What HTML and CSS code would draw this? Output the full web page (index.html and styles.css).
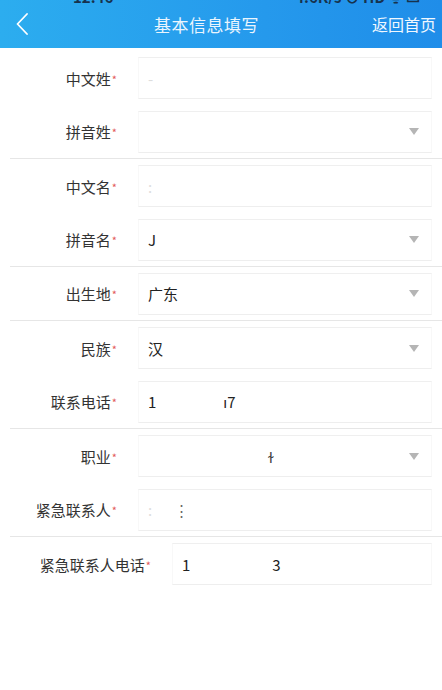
FILE: index.html
```html
<!DOCTYPE html>
<html lang="zh-CN">
<head>
<meta charset="utf-8">
<title>基本信息填写</title>
<link rel="stylesheet" href="styles.css">
</head>
<body>
<header class="header">
  <div class="status">
    <span class="status-left">12:46</span>
    <span class="status-right">4.6K/s ⊙ HD ᯤ ▭</span>
  </div>
  <div class="nav">
    <div class="back">
      <svg width="12" height="22" viewBox="0 0 12 22"><polyline points="11,1 1.5,11 11,21" fill="none" stroke="#ffffff" stroke-width="1.8" stroke-linecap="round" stroke-linejoin="round"/></svg>
    </div>
    <div class="title">基本信息填写</div>
    <div class="home">返回首页</div>
  </div>
</header>
<main class="form">
  <div class="row">
    <div class="label">中文姓<span class="req">*</span></div>
    <div class="field"><span class="faint">-</span></div>
  </div>
  <div class="row sep">
    <div class="label">拼音姓<span class="req">*</span></div>
    <div class="field select"><span class="value"></span><span class="arrow"></span></div>
  </div>
  <div class="row">
    <div class="label">中文名<span class="req">*</span></div>
    <div class="field"><span class="faint">:</span></div>
  </div>
  <div class="row sep">
    <div class="label">拼音名<span class="req">*</span></div>
    <div class="field select"><span class="value">J</span><span class="arrow"></span></div>
  </div>
  <div class="row sep">
    <div class="label">出生地<span class="req">*</span></div>
    <div class="field select"><span class="value">广东</span><span class="arrow"></span></div>
  </div>
  <div class="row">
    <div class="label">民族<span class="req">*</span></div>
    <div class="field select"><span class="value">汉</span><span class="arrow"></span></div>
  </div>
  <div class="row sep">
    <div class="label">联系电话<span class="req">*</span></div>
    <div class="field"><span class="value">1</span><span class="value gap-phone">ı7</span></div>
  </div>
  <div class="row">
    <div class="label">职业<span class="req">*</span></div>
    <div class="field select"><span class="value gap-job">ɫ</span><span class="arrow"></span></div>
  </div>
  <div class="row sep">
    <div class="label">紧急联系人<span class="req">*</span></div>
    <div class="field"><span class="faint">:</span><span class="value gap-contact">⋮</span></div>
  </div>
  <div class="row wide">
    <div class="label">紧急联系人电话<span class="req">*</span></div>
    <div class="field"><span class="value">1</span><span class="value gap-ephone">3</span></div>
  </div>
</main>
</body>
</html>
```
FILE: styles.css
```css
* { box-sizing: border-box; }
html, body {
  margin: 0;
  padding: 0;
  background: #ffffff;
  font-family: "Noto Sans CJK SC", "Noto Sans", sans-serif;
  color: #333333;
}
.header {
  height: 48px;
  background: linear-gradient(90deg, #2cadef 0%, #2599ec 60%, #1f8de9 100%);
  display: flex;
  flex-direction: column;
}
.status {
  height: 4px;
  overflow: hidden;
  display: flex;
  justify-content: space-between;
  padding: 0 22px 0 73px;
  color: #17324d;
  font-size: 15px;
  font-weight: bold;
  line-height: 14px;
}
.status span { margin-top: -10px; }
.nav {
  flex: 1;
  display: flex;
  align-items: center;
  color: #ffffff;
  padding-bottom: 4px;
}
.back {
  width: 41px;
  padding-left: 16px;
  display: flex;
  align-items: center;
}
.title {
  flex: 1;
  text-align: center;
  font-size: 17px;
  color: #eaf5fe;
  letter-spacing: 0.5px;
}
.home {
  font-size: 16px;
  padding-right: 6px;
  color: #f0f8ff;
}
.form { padding-top: 3px; }
.row {
  height: 54px;
  display: flex;
  align-items: center;
  gap: 21px;
  padding-right: 10px;
}
.row.sep {
  border-bottom: 1px solid #e6e6e6;
  margin-left: 10px;
}
.row.sep .label { width: 107px; }
.label {
  width: 117px;
  flex: none;
  text-align: right;
  font-size: 15px;
  color: #333333;
  white-space: nowrap;
}
.row.wide .label { width: 151px; }
.req {
  color: #e25a5a;
  font-size: 11px;
  margin-left: 1px;
  position: relative;
  top: -1px;
}
.field {
  flex: 1;
  height: 42px;
  border: 1px solid #f8f8f8;
  border-top-color: #efefef;
  border-bottom-color: #eeeeee;
  display: flex;
  align-items: center;
  padding: 0 9px;
  font-size: 15px;
  color: #222222;
}
.select .value { flex: 1; }
.value { white-space: pre; }
.faint { color: #dddddd; }
.gap-phone { margin-left: 67px; }
.gap-job { margin-left: 120px; color: #444; }
.gap-contact { margin-left: 22px; color: #666; }
.gap-ephone { margin-left: 82px; }
.arrow {
  width: 0;
  height: 0;
  border-left: 5px solid transparent;
  border-right: 5px solid transparent;
  border-top: 7px solid #b5b5b5;
  margin-right: 3px;
}
```
